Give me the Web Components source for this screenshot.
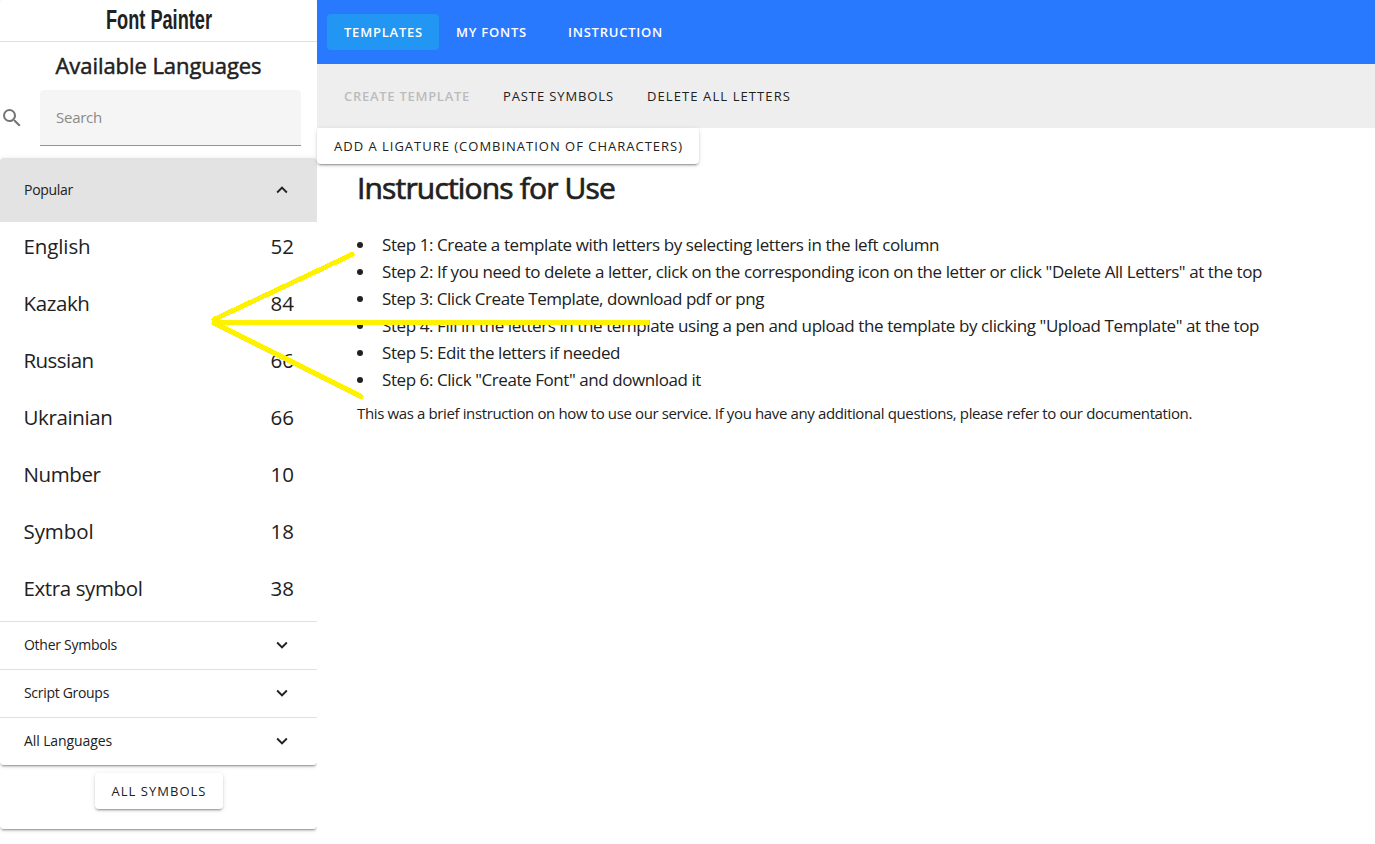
<!DOCTYPE html>
<html lang="en">
<head>
<meta charset="utf-8">
<title>Font Painter</title>
<style>
  body {
    margin: 0;
    background: #ffffff;
    color: #212121;
    font-family: 'Open Sans', 'Noto Sans', sans-serif;
    font-stretch: 88%;
    overflow: hidden;
  }
</style>
</head>
<body>
<font-painter-app></font-painter-app>

<script>
  // Text that adjusts its tracking to fill the given width
  class FitText extends HTMLElement {
    constructor() {
      super();
      this.attachShadow({ mode: 'open' });
      this.shadowRoot.innerHTML = `
        <style>
          :host { display: block; white-space: nowrap; flex: none; }
          span { display: inline-block; transform-origin: 0 50%; letter-spacing: 0; }
        </style>
        <span><slot></slot></span>
      `;
    }

    connectedCallback() {
      const width = Number(this.getAttribute('w'));
      const span = this.shadowRoot.querySelector('span');
      const natural = span.getBoundingClientRect().width;
      if (this.hasAttribute('squeeze')) {
        span.style.transform = `scaleX(${width / natural})`;
      } else {
        span.style.letterSpacing = `${(width - natural) / this.textContent.length}px`;
      }
      this.style.width = `${width}px`;
    }
  }
  customElements.define('fit-text', FitText);

  class MdIcon extends HTMLElement {
    constructor() {
      super();
      this.attachShadow({ mode: 'open' });
      this.icons = {
        up: 'M7.41,15.41L12,10.83L16.59,15.41L18,14L12,8L6,14L7.41,15.41Z',
        down: 'M7.41,8.58L12,13.17L16.59,8.58L18,10L12,16L6,10L7.41,8.58Z',
        search: 'M9.5,3A6.5,6.5 0 0,1 16,9.5C16,11.11 15.41,12.59 14.44,13.73L14.71,14H15.5L20.5,19L19,20.5L14,15.5V14.71L13.73,14.44C12.59,15.41 11.11,16 9.5,16A6.5,6.5 0 0,1 3,9.5A6.5,6.5 0 0,1 9.5,3M9.5,5C7,5 5,7 5,9.5C5,12 7,14 9.5,14C12,14 14,12 14,9.5C14,7 12,5 9.5,5Z'
      };
    }

    connectedCallback() {
      const size = this.getAttribute('size') || 24;
      this.shadowRoot.innerHTML = `
        <style>
          :host { display: block; flex: none; }
          svg { display: block; fill: currentColor; }
        </style>
        <svg width="${size}" height="${size}" viewBox="0 0 24 24"><path d="${this.icons[this.getAttribute('name')]}"/></svg>
      `;
    }
  }
  customElements.define('md-icon', MdIcon);

  class MdButton extends HTMLElement {
    constructor() {
      super();
      this.attachShadow({ mode: 'open' });
      this.shadowRoot.innerHTML = `
        <style>
          :host {
            display: flex;
            width: max-content;
            height: 36px;
            box-sizing: border-box;
            padding: 0 16px 0 17px;
            align-items: center;
            border-radius: 4px;
            font-size: 13px;
            line-height: 36px;
          }
          :host([raised]) {
            background: #ffffff;
            box-shadow: 0 3px 1px -2px rgba(0,0,0,.2), 0 2px 2px 0 rgba(0,0,0,.14), 0 1px 5px 0 rgba(0,0,0,.12);
          }
          :host([active]) { background: #2196f3; }
          :host([nav]) { color: #ffffff; font-weight: 600; }
          :host([disabled]) { color: #bcbcbc; font-weight: 600; }
        </style>
        <slot></slot>
      `;
    }
  }
  customElements.define('md-button', MdButton);

  class PanelHeader extends HTMLElement {
    constructor() {
      super();
      this.attachShadow({ mode: 'open' });
    }

    connectedCallback() {
      this.shadowRoot.innerHTML = `
        <style>
          :host {
            display: flex;
            justify-content: space-between;
            align-items: center;
            height: 48px;
            box-sizing: border-box;
            padding: 0 24px 2px;
            border-top: 1px solid #e0e0e0;
            font-size: 14px;
            line-height: 20px;
          }
          :host([open]) {
            height: 64px;
            padding-bottom: 0;
            background: #e3e3e3;
            border-top: 0;
            border-radius: 4px 4px 0 0;
          }
        </style>
        <slot></slot>
        <md-icon size="22" name="${this.hasAttribute('open') ? 'up' : 'down'}"></md-icon>
      `;
    }
  }
  customElements.define('panel-header', PanelHeader);

  class LanguageList extends HTMLElement {
    constructor() {
      super();
      this.attachShadow({ mode: 'open' });
      this.languages = [
        { name: 'English', count: 52, w: 67 },
        { name: 'Kazakh', count: 84, w: 66 },
        { name: 'Russian', count: 66, w: 70 },
        { name: 'Ukrainian', count: 66, w: 89 },
        { name: 'Number', count: 10, w: 77 },
        { name: 'Symbol', count: 18, w: 70 },
        { name: 'Extra symbol', count: 38, w: 119 }
      ];
    }

    connectedCallback() {
      this.shadowRoot.innerHTML = `
        <style>
          :host { display: block; }
          .row {
            display: flex;
            justify-content: space-between;
            height: 57px;
            padding: 0 23px 0 23.500px;
            font-size: 20.500px;
            line-height: 49px;
          }
        </style>
        ${this.languages.map(l => `
          <div class="row">
            <fit-text w="${l.w}">${l.name}</fit-text>
            <fit-text w="23.500">${l.count}</fit-text>
          </div>
        `).join('')}
      `;
    }
  }
  customElements.define('language-list', LanguageList);

  class SideBar extends HTMLElement {
    constructor() {
      super();
      this.attachShadow({ mode: 'open' });
    }

    connectedCallback() {
      this.shadowRoot.innerHTML = `
        <style>
          :host {
            display: block;
            width: 317px;
            overflow: clip;
          }
          .card {
            border-radius: 4px;
            box-shadow: 0 3px 1px -2px rgba(0,0,0,.2), 0 2px 2px 0 rgba(0,0,0,.14), 0 1px 5px 0 rgba(0,0,0,.12);
          }
          .side { height: 829px; }
          .title {
            display: flex;
            justify-content: center;
            height: 41px;
            border-bottom: 1px solid #e0e0e0;
            font: bold 27px/41px 'Liberation Sans Narrow', 'Liberation Sans', sans-serif;
          }
          .subtitle {
            display: flex;
            justify-content: center;
            height: 48px;
            font-size: 22px;
            line-height: 47px;
            -webkit-text-stroke: 0.5px currentColor;
          }
          .search {
            display: flex;
            align-items: center;
            gap: 16px;
            height: 56px;
            margin-bottom: 12px;
            color: #757575;
          }
          .field {
            width: 261px;
            height: 56px;
            box-sizing: border-box;
            padding-left: 16px;
            background: #f5f5f5;
            border-bottom: 1px solid #949494;
            border-radius: 4px 4px 0 0;
            font-size: 15px;
            line-height: 54px;
            color: #8a8a8a;
          }
          .footer { display: flex; justify-content: center; padding-top: 8px; }
        </style>
        <div class="side card">
          <div class="title"><fit-text squeeze w="106">Font Painter</fit-text></div>
          <div class="subtitle"><fit-text w="206">Available Languages</fit-text></div>
          <div class="search">
            <md-icon name="search"></md-icon>
            <div class="field"><fit-text w="46">Search</fit-text></div>
          </div>
          <div class="card">
            <panel-header open><fit-text w="49">Popular</fit-text></panel-header>
            <language-list></language-list>
            <panel-header><fit-text w="93">Other Symbols</fit-text></panel-header>
            <panel-header><fit-text w="85">Script Groups</fit-text></panel-header>
            <panel-header><fit-text w="88">All Languages</fit-text></panel-header>
          </div>
          <div class="footer"><md-button raised><fit-text w="95">ALL SYMBOLS</fit-text></md-button></div>
        </div>
      `;
    }
  }
  customElements.define('side-bar', SideBar);

  class InstructionSteps extends HTMLElement {
    constructor() {
      super();
      this.attachShadow({ mode: 'open' });
      this.steps = [
        { text: 'Step 1: Create a template with letters by selecting letters in the left column', w: 557 },
        { text: 'Step 2: If you need to delete a letter, click on the corresponding icon on the letter or click "Delete All Letters" at the top', w: 880 },
        { text: 'Step 3: Click Create Template, download pdf or png', w: 382 },
        { text: 'Step 4: Fill in the letters in the template using a pen and upload the template by clicking "Upload Template" at the top', w: 877 },
        { text: 'Step 5: Edit the letters if needed', w: 238 },
        { text: 'Step 6: Click "Create Font" and download it', w: 319 }
      ];
    }

    connectedCallback() {
      this.shadowRoot.innerHTML = `
        <style>
          :host { display: block; padding-left: 40px; }
          h1 {
            margin: 0;
            font-size: 30px;
            line-height: 48px;
            font-weight: 400;
            -webkit-text-stroke: 0.7px currentColor;
          }
          ul { list-style: none; margin: 19px 0 0; padding: 0; }
          li {
            display: flex;
            align-items: center;
            gap: 19px;
            height: 27px;
            font-size: 17px;
            line-height: 27px;
          }
          li::before {
            content: "";
            width: 6px;
            height: 6px;
            border-radius: 50%;
            background: #212121;
            margin-top: 1px;
          }
          p { margin: 8px 0 0; font-size: 15px; line-height: 24px; }
        </style>
        <h1><fit-text w="258">Instructions for Use</fit-text></h1>
        <ul>
          ${this.steps.map(s => `<li><fit-text w="${s.w}">${s.text}</fit-text></li>`).join('')}
        </ul>
        <p><fit-text w="835">This was a brief instruction on how to use our service. If you have any additional questions, please refer to our documentation.</fit-text></p>
      `;
    }
  }
  customElements.define('instruction-steps', InstructionSteps);

  class FontPainterApp extends HTMLElement {
    constructor() {
      super();
      this.attachShadow({ mode: 'open' });
    }

    connectedCallback() {
      this.shadowRoot.innerHTML = `
        <style>
          :host { display: grid; grid-template-columns: 317px 1fr; height: 844px; position: relative; }
          .bar {
            display: flex;
            align-items: center;
            height: 64px;
            box-sizing: border-box;
            padding-left: 10px;
          }
          .nav { background: #2979ff; }
          .nav md-button:last-child { margin-left: 8px; }
          .tools { background: #eeeeee; }
          side-bar { height: 844px; }
          /* Arrows drawn over both columns */
          .marks { position: absolute; left: 0; top: 0; pointer-events: none; }
        </style>
        <side-bar></side-bar>
        <main>
          <div class="bar nav">
            <md-button nav active><fit-text w="79">TEMPLATES</fit-text></md-button>
            <md-button nav><fit-text w="71">MY FONTS</fit-text></md-button>
            <md-button nav><fit-text w="95">INSTRUCTION</fit-text></md-button>
          </div>
          <div class="bar tools">
            <md-button disabled><fit-text w="126">CREATE TEMPLATE</fit-text></md-button>
            <md-button><fit-text w="111">PASTE SYMBOLS</fit-text></md-button>
            <md-button><fit-text w="144">DELETE ALL LETTERS</fit-text></md-button>
          </div>
          <md-button raised><fit-text w="349">ADD A LIGATURE (COMBINATION OF CHARACTERS)</fit-text></md-button>
          <instruction-steps></instruction-steps>
        </main>
        <svg class="marks" width="700" height="420" fill="none" stroke="#fff200" stroke-width="5" shape-rendering="crispEdges">
          <path d="M214 319.500L352 254.500M214 323L361 396.500" stroke-linecap="round"/>
          <path d="M212 322.500H648.500"/>
        </svg>
      `;
    }
  }
  customElements.define('font-painter-app', FontPainterApp);
</script>
</body>
</html>
